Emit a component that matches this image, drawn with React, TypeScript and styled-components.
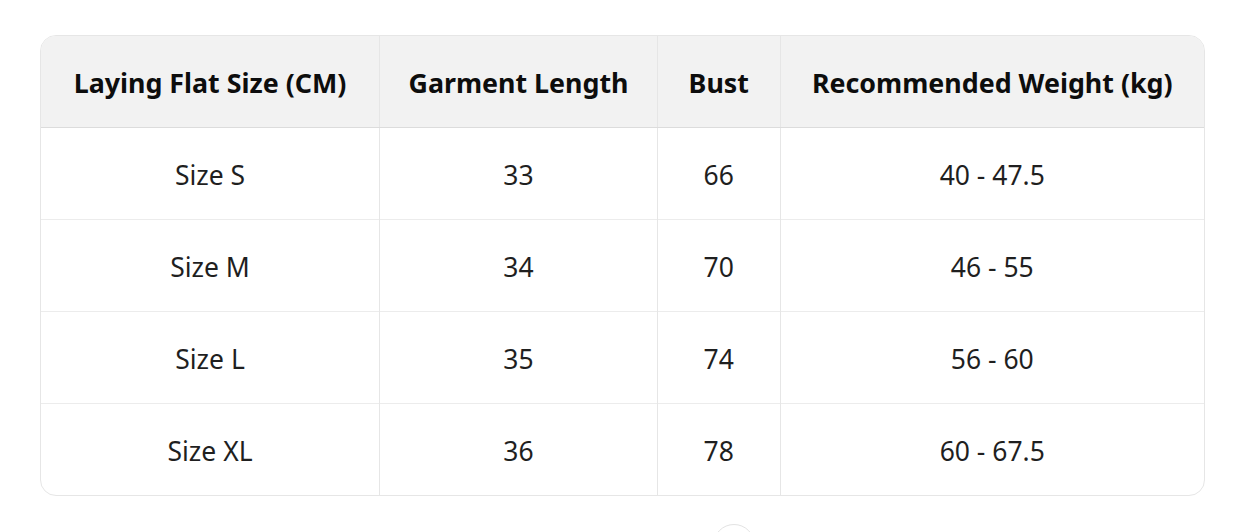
import * as React from 'react'
import styled, { createGlobalStyle } from 'styled-components'

const GlobalStyle = createGlobalStyle`
  html, body {
    margin: 0;
    padding: 0;
    background: #fff;
  }
  body {
    font-family: 'Noto Sans', 'Open Sans', sans-serif;
    color: #1a1a1a;
  }
`

const Page = styled.div`
  position: relative;
  width: 1253px;
  height: 532px;
  overflow: hidden;
  padding: 35px 0 0 40px;
  box-sizing: border-box;
`

const TableWrap = styled.div`
  width: 1165px;
  box-sizing: border-box;
  border: 1px solid #e6e6e6;
  border-radius: 16px;
  overflow: hidden;
`

const Table = styled.table`
  width: 100%;
  border-collapse: collapse;
  table-layout: fixed;
`

const HeadCell = styled.th<{ $w?: number }>`
  ${(p) => (p.$w ? `width: ${p.$w}px;` : '')}
  height: 89px;
  padding: 2px 0 0;
  background: #f2f2f2;
  font-size: 26.8px;
  font-weight: 700;
  color: #0d0d0d;
  text-align: center;
  border-bottom: 1px solid #dcdcdc;
  border-left: 1px solid #e6e6e6;
  &:first-child {
    border-left: none;
  }
`

const Row = styled.tr`
  & + & td {
    border-top: 1px solid #ececec;
  }
`

const Cell = styled.td`
  height: 89px;
  padding: 2px 0 0;
  font-size: 26.5px;
  font-weight: 400;
  color: #1f1f1f;
  text-align: center;
  border-left: 1px solid #e6e6e6;
  &:first-child {
    border-left: none;
  }
`

const ScrollButton = styled.div`
  position: absolute;
  left: 713px;
  top: 524px;
  width: 40px;
  height: 40px;
  border-radius: 50%;
  border: 1px solid #e3e3e3;
  background: #fff;
`

const columns = [
  { label: 'Laying Flat Size (CM)', w: 338 },
  { label: 'Garment Length', w: 277 },
  { label: 'Bust', w: 121.5 },
  { label: 'Recommended Weight (kg)' },
]

const rows = [
  ['Size S', '33', '66', '40 - 47.5'],
  ['Size M', '34', '70', '46 - 55'],
  ['Size L', '35', '74', '56 - 60'],
  ['Size XL', '36', '78', '60 - 67.5'],
]

const App = () => {
  return (
    <Page>
      <GlobalStyle />
      <TableWrap>
        <Table>
          <thead>
            <tr>
              {columns.map((c) => (
                <HeadCell key={c.label} $w={c.w}>
                  {c.label}
                </HeadCell>
              ))}
            </tr>
          </thead>
          <tbody>
            {rows.map((r) => (
              <Row key={r[0]}>
                {r.map((v, i) => (
                  <Cell key={i}>{v}</Cell>
                ))}
              </Row>
            ))}
          </tbody>
        </Table>
      </TableWrap>
      <ScrollButton />
    </Page>
  )
}

export default App
